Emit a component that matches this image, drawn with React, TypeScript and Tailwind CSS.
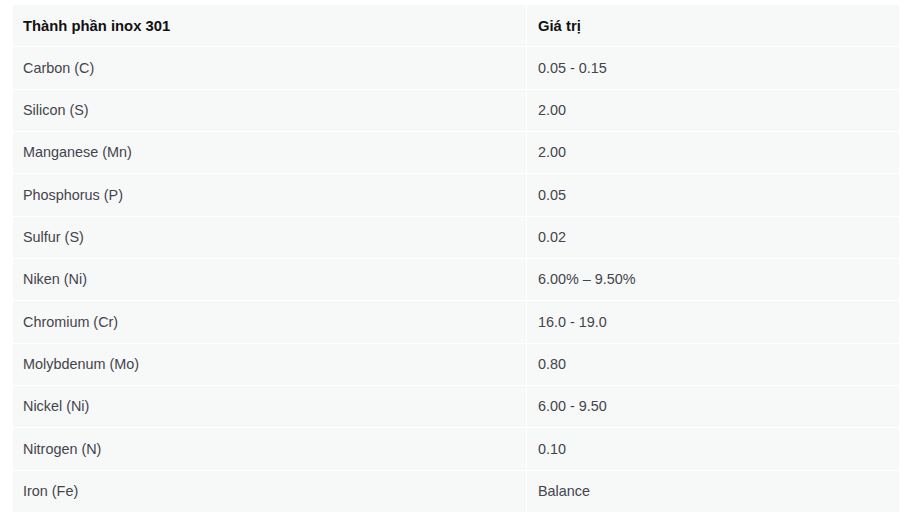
const rows: [string, string][] = [
  ["Carbon (C)", "0.05 - 0.15"],
  ["Silicon (S)", "2.00"],
  ["Manganese (Mn)", "2.00"],
  ["Phosphorus (P)", "0.05"],
  ["Sulfur (S)", "0.02"],
  ["Niken (Ni)", "6.00% – 9.50%"],
  ["Chromium (Cr)", "16.0 - 19.0"],
  ["Molybdenum (Mo)", "0.80"],
  ["Nickel (Ni)", "6.00 - 9.50"],
  ["Nitrogen (N)", "0.10"],
  ["Iron (Fe)", "Balance"],
];

export default function App() {
  return (
    <div className="w-[904px] h-[520px] bg-white pl-[13px] pt-[5px] font-['Liberation_Sans',Arial,sans-serif] text-[14.4px]">
      <div className="w-[886px] flex flex-col gap-px bg-white">
        <div className="flex h-[41.33px] gap-px text-[14.8px] font-bold text-[#111]">
          <div className="w-[513px] bg-[#f7f8f8] flex items-center pl-[10px] pt-[1px]">
            Thành phần inox 301
          </div>
          <div className="flex-1 bg-[#f7f8f8] flex items-center pl-[11px] pt-[1px]">
            Giá trị
          </div>
        </div>
        {rows.map(([name, value]) => (
          <div key={name} className="flex h-[41.33px] gap-px text-[#44444c]">
            <div className="w-[513px] bg-[#f7f8f8] flex items-center pl-[10px] pt-[1px]">{name}</div>
            <div className="flex-1 bg-[#f7f8f8] flex items-center pl-[11px] pt-[1px]">{value}</div>
          </div>
        ))}
      </div>
    </div>
  );
}
